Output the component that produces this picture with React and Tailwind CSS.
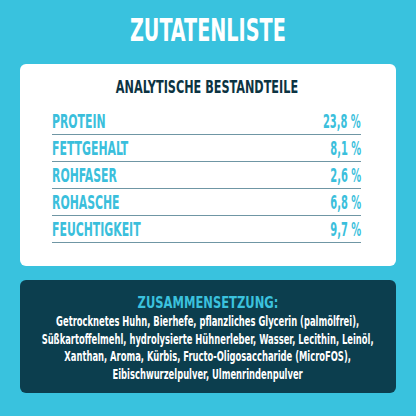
const rows = [
  ['PROTEIN', '23,8 %'],
  ['FETTGEHALT', '8,1 %'],
  ['ROHFASER', '2,6 %'],
  ['ROHASCHE', '6,8 %'],
  ['FEUCHTIGKEIT', '9,7 %'],
]

export default function App() {
  return (
    <div className="w-[416px] h-[416px] bg-[#39c2de] px-5 pt-3 font-['DejaVu_Sans_Condensed','DejaVu_Sans',sans-serif] font-bold overflow-hidden">
      {/* Titel */}
      <div className="flex justify-center h-9 text-[32px] leading-9 text-white">
        <span className="shrink-0 whitespace-nowrap scale-x-[0.667]">ZUTATENLISTE</span>
      </div>

      {/* Analytische Bestandteile */}
      <div className="mt-4 bg-white rounded-md pt-[13px] pb-[23px] pl-8 pr-[35px]">
        <div className="flex justify-center h-5 text-[17px] leading-5 text-[#0c3342]">
          <span className="shrink-0 whitespace-nowrap scale-x-[0.735]">ANALYTISCHE BESTANDTEILE</span>
        </div>
        <div className="mt-[11px] flex flex-col">
          {rows.map(([label, value]) => (
            <div key={label} className="flex justify-between h-[27px] border-b border-[#6f96a4] text-[20px] leading-[26px] text-[#3bbfdc]">
              <span className="whitespace-nowrap origin-left scale-x-[0.605]">{label}</span>
              <span className="whitespace-nowrap origin-right scale-x-[0.55]">{value}</span>
            </div>
          ))}
        </div>
      </div>

      {/* Zusammensetzung */}
      <div className="mt-[14px] bg-[#0c3e4e] rounded-md pt-[14px] pb-[9px]">
        <div className="flex justify-center h-[18px] text-[16px] leading-[18px] text-[#3bc2de]">
          <span className="shrink-0 whitespace-nowrap scale-x-[0.8]">ZUSAMMENSETZUNG:</span>
        </div>
        <div className="mt-px flex justify-center text-[14px] leading-[17.7px] text-white">
          <p className="shrink-0 whitespace-nowrap text-center scale-x-[0.665]">
            Getrocknetes Huhn, Bierhefe, pflanzliches Glycerin (palmölfrei),<br />
            Süßkartoffelmehl, hydrolysierte Hühnerleber, Wasser, Lecithin, Leinöl,<br />
            Xanthan, Aroma, Kürbis, Fructo-Oligosaccharide (MicroFOS),<br />
            Eibischwurzelpulver, Ulmenrindenpulver
          </p>
        </div>
      </div>
    </div>
  )
}
